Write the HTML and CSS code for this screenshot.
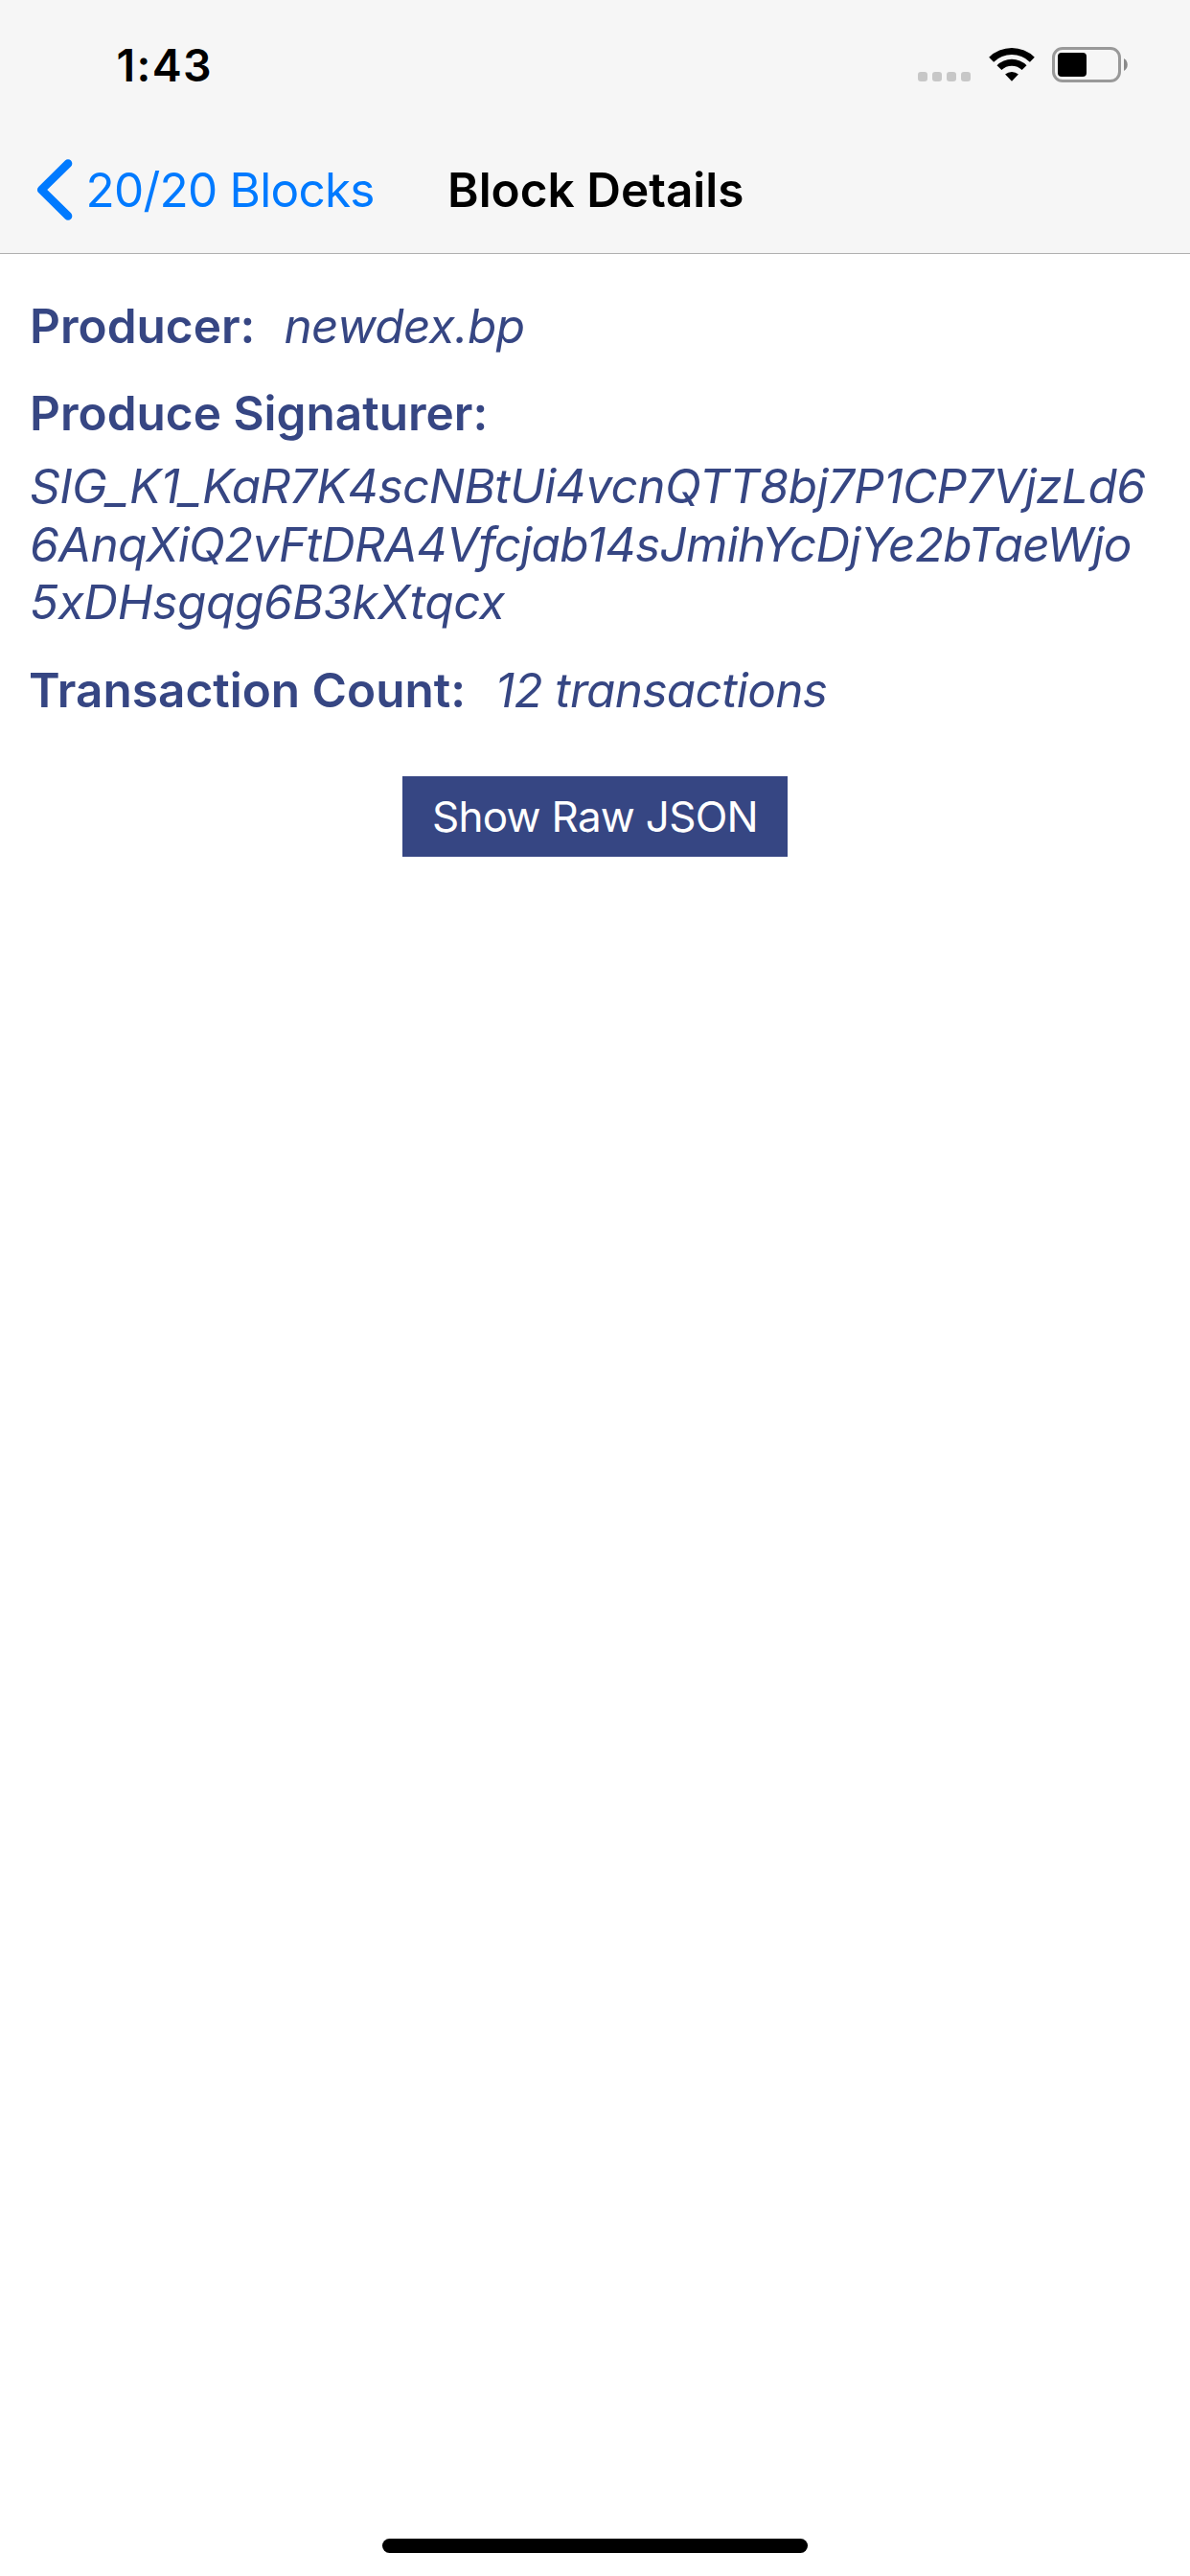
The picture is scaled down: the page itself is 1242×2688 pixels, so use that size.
FILE: index.html
```html
<!DOCTYPE html>
<html lang="en">
<head>
<meta charset="utf-8">
<title>Block Details</title>
<link rel="stylesheet" href="styles.css">
</head>
<body>
<header class="header">
  <div class="status">
    <span class="time">1:43</span>
    <div class="indicators">
      <div class="signal"><i></i><i></i><i></i><i></i></div>
      <svg class="wifi" width="48" height="36" viewBox="0 0 48 36">
        <path d="M.2 10.8a34 34 0 0 1 47.6 0l-4.9 4.9a27 27 0 0 0-37.8 0z"/>
        <path d="M8.5 19.2a22 22 0 0 1 31 0l-4.9 4.9a15 15 0 0 0-21.2 0z"/>
        <path d="M17.1 28.6a10.5 10.5 0 0 1 13.8 0L24 35.8z"/>
      </svg>
      <svg class="battery" width="80" height="37" viewBox="0 0 80 37">
        <rect x="1.5" y="1.5" width="69" height="34" rx="9.5" fill="none" stroke="#999" stroke-width="3"/>
        <rect x="6" y="6" width="30" height="25" rx="4"/>
        <path d="M75 12a7.5 7.5 0 0 1 0 13z" fill="#8a8a8a"/>
      </svg>
    </div>
  </div>
  <nav class="nav">
    <a class="back">
      <svg width="38" height="64" viewBox="0 0 38 64"><path d="M33 4.6 5.2 32 33 59.4" fill="none" stroke="#007aff" stroke-width="8.6" stroke-linecap="round" stroke-linejoin="round"/></svg>
      <span>20/20 Blocks</span>
    </a>
    <h1 class="title">Block Details</h1>
  </nav>
</header>
<main class="details">
  <div class="row"><b>Producer:</b><em class="producer">newdex.bp</em></div>
  <div class="row"><b>Produce Signaturer:</b></div>
  <div class="signature">
    <span class="line-1">SIG_K1_KaR7K4scNBtUi4vcnQTT8bj7P1CP7VjzLd6</span>
    <span class="line-2">6AnqXiQ2vFtDRA4Vfcjab14sJmihYcDjYe2bTaeWjo</span>
    <span class="line-3">5xDHsgqg6B3kXtqcx</span>
  </div>
  <div class="row count"><b>Transaction Count:</b><em>12 transactions</em></div>
  <button class="raw">Show Raw JSON</button>
</main>
<div class="home"></div>
</body>
</html>
```
FILE: styles.css
```css
* { box-sizing: border-box; }

body {
  margin: 0;
  height: 2688px;
  display: flex;
  flex-direction: column;
  align-items: center;
  background: #fff;
  font: 400 49.5px/60px Inter, sans-serif;
  white-space: nowrap;
}

.header {
  width: 100%;
  height: 265px;
  background: #f6f6f6;
  border-bottom: 1px solid #b0b0b0;
}

.status {
  height: 132px;
  padding: 40px 64px 0 121.5px;
  display: flex;
  justify-content: space-between;
  align-items: flex-start;
}

.time {
  font-size: 46.5px;
  line-height: 56px;
  font-weight: 600;
  letter-spacing: 1.35px;
}

.indicators { display: flex; padding-top: 9px; }
.signal { display: flex; gap: 5px; padding-top: 26px; }
.signal i { width: 10px; height: 10px; border-radius: 3px; background: #c7c7c7; }
.wifi { margin-left: 19px; }
.battery { margin-left: 18px; }

.nav {
  height: 132px;
  padding: 34px 0 0 38px;
  display: flex;
  align-items: flex-start;
}

.back {
  width: 429px;
  height: 64px;
  display: flex;
  color: #007aff;
  letter-spacing: -.75px;
}
.back span { padding: 2px 0 0 13.5px; }

.title {
  margin: 2px 0 0;
  font-size: inherit;
  font-weight: 600;
}

.details {
  width: 100%;
  padding: 45px 31px 0;
  display: flex;
  flex-direction: column;
  color: #364683;
}

.row { display: flex; height: 60px; margin-bottom: 31px; }
.row b { font-weight: 600; }
.row em { letter-spacing: -.66px; margin-left: 31px; }
.row .producer { letter-spacing: -.55px; margin-left: 30px; }

.signature {
  height: 183px;
  margin-top: -15px;
  font-style: italic;
  line-height: 60.6px;
}
.signature span { display: block; }
.line-1 { letter-spacing: -.556px; }
.line-2 { letter-spacing: -.7px; }
.line-3 { letter-spacing: -.342px; }

.count { margin: 30px 0 60px -1px; }

.raw {
  align-self: center;
  width: 402px;
  height: 84px;
  padding: 0;
  border: 0;
  background: #364683;
  color: #fff;
  font: 400 44px/54px Inter, sans-serif;
  letter-spacing: -.725px;
}

.home {
  width: 444px;
  height: 15px;
  margin: auto 0 24px;
  border-radius: 8px;
  background: #000;
}
```
